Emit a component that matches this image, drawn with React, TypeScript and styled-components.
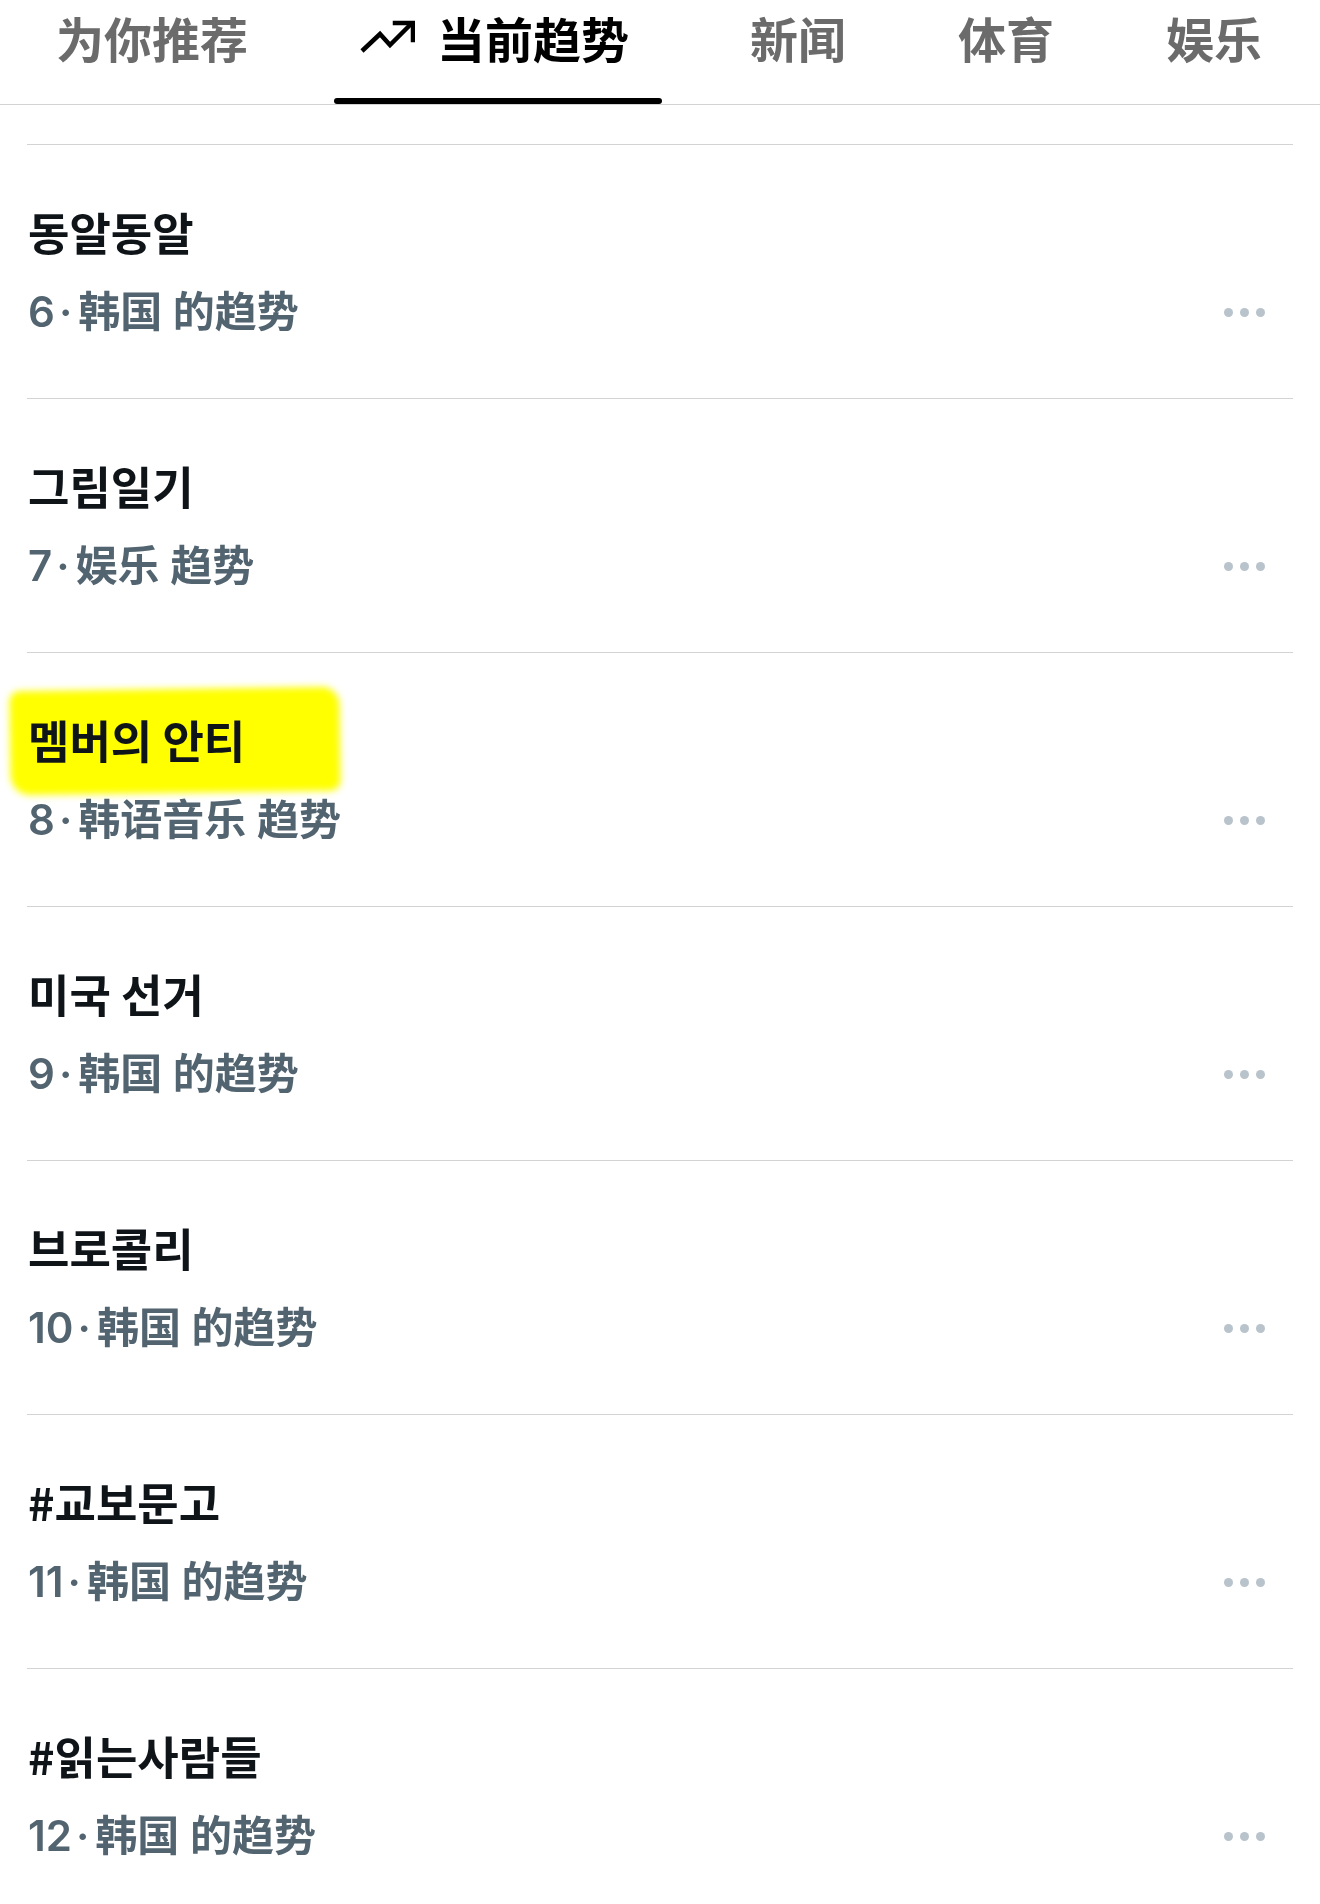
import styled, { createGlobalStyle } from "styled-components";

const GlobalStyle = createGlobalStyle`
  html, body {
    margin: 0;
    padding: 0;
    background: #ffffff;
  }
  body {
    font-family: "Noto Sans CJK SC", "Noto Sans", sans-serif;
    overflow: hidden;
  }
`;

const Page = styled.div`
  width: 1320px;
  height: 1904px;
  overflow: hidden;
  background: #ffffff;
`;

const TabBar = styled.nav`
  display: flex;
  align-items: flex-start;
  height: 104px;
  padding-left: 26px;
  gap: 52px;
  border-bottom: 1px solid #d3d3d3;
  white-space: nowrap;
`;

const Tab = styled.div<{ $active?: boolean }>`
  position: relative;
  display: flex;
  align-items: center;
  gap: 22px;
  height: 74px;
  padding: ${(p) => (p.$active ? "0 33px 0 25px" : "0 30px")};
  margin: ${(p) => (p.$active ? "0 6px 0 4px" : "0")};
  font-family: "Noto Sans CJK SC", sans-serif;
  font-size: 48px;
  font-weight: 700;
  color: ${(p) => (p.$active ? "#000000" : "#6b6b6b")};
`;

const Indicator = styled.span`
  position: absolute;
  left: 0;
  right: 0;
  bottom: -30px;
  height: 6px;
  border-radius: 3px;
  background: #000000;
`;

const List = styled.section`
  margin: 0 27px;
`;

const Stub = styled.div`
  height: 39px;
`;

const Row = styled.article`
  height: 254px;
  border-top: 1px solid #d3d3d3;
  padding: 56px 0 0 1px;
  box-sizing: border-box;
`;

const TitleWrap = styled.div`
  position: relative;
  display: inline-block;
`;

const Title = styled.h3`
  position: relative;
  margin: 0;
  font-family: "Noto Sans CJK KR", sans-serif;
  font-size: 45px;
  font-weight: 700;
  line-height: 62px;
  color: #0f1419;
`;

const Highlight = styled.span`
  position: absolute;
  left: -18px;
  top: -20px;
  width: 330px;
  height: 104px;
  background: #ffff00;
  border-radius: 10px 18px 10px 20px;
  filter: blur(3.5px);
  transform: rotate(-0.8deg);
  mix-blend-mode: multiply;
`;

const MetaLine = styled.div`
  display: flex;
  align-items: center;
  justify-content: space-between;
  margin-top: 22px;
`;

const Meta = styled.span`
  font-family: Inter, "Noto Sans CJK SC", sans-serif;
  font-size: 42px;
  font-weight: 600;
  line-height: 54px;
  color: #536471;
`;

const Sep = styled.span`
  margin: 0 6px 0 4px;
`;

const Dots = styled.div`
  display: flex;
  gap: 7px;
  margin-right: 28px;

  span {
    width: 9px;
    height: 9px;
    border-radius: 50%;
    background: #b9c3cc;
  }
`;

const TrendIcon = () => (
  <svg width="56" height="36" viewBox="0 0 56 36" fill="none">
    <polyline
      points="3,32 21,15 31,26 52,5"
      stroke="#000"
      strokeWidth="4.5"
      strokeLinejoin="miter"
    />
    <polyline
      points="36,4 54,4 54,21"
      stroke="#000"
      strokeWidth="4.5"
      strokeLinejoin="miter"
      strokeLinecap="square"
    />
  </svg>
);

const trends = [
  { rank: 6, title: "동알동알", meta: "韩国 的趋势" },
  { rank: 7, title: "그림일기", meta: "娱乐 趋势" },
  { rank: 8, title: "멤버의 안티", meta: "韩语音乐 趋势", marked: true },
  { rank: 9, title: "미국 선거", meta: "韩国 的趋势" },
  { rank: 10, title: "브로콜리", meta: "韩国 的趋势" },
  { rank: 11, title: "#교보문고", meta: "韩国 的趋势" },
  { rank: 12, title: "#읽는사람들", meta: "韩国 的趋势" },
];

export default function App() {
  return (
    <Page>
      <GlobalStyle />
      <TabBar>
        <Tab>为你推荐</Tab>
        <Tab $active>
          <TrendIcon />
          当前趋势
          <Indicator />
        </Tab>
        <Tab>新闻</Tab>
        <Tab>体育</Tab>
        <Tab>娱乐</Tab>
      </TabBar>
      <List>
        <Stub />
        {trends.map((t) => (
          <Row key={t.rank}>
            <TitleWrap>
              {t.marked && <Highlight />}
              <Title>{t.title}</Title>
            </TitleWrap>
            <MetaLine>
              <Meta>
                {t.rank}
                <Sep>·</Sep>
                {t.meta}
              </Meta>
              <Dots>
                <span />
                <span />
                <span />
              </Dots>
            </MetaLine>
          </Row>
        ))}
      </List>
    </Page>
  );
}
